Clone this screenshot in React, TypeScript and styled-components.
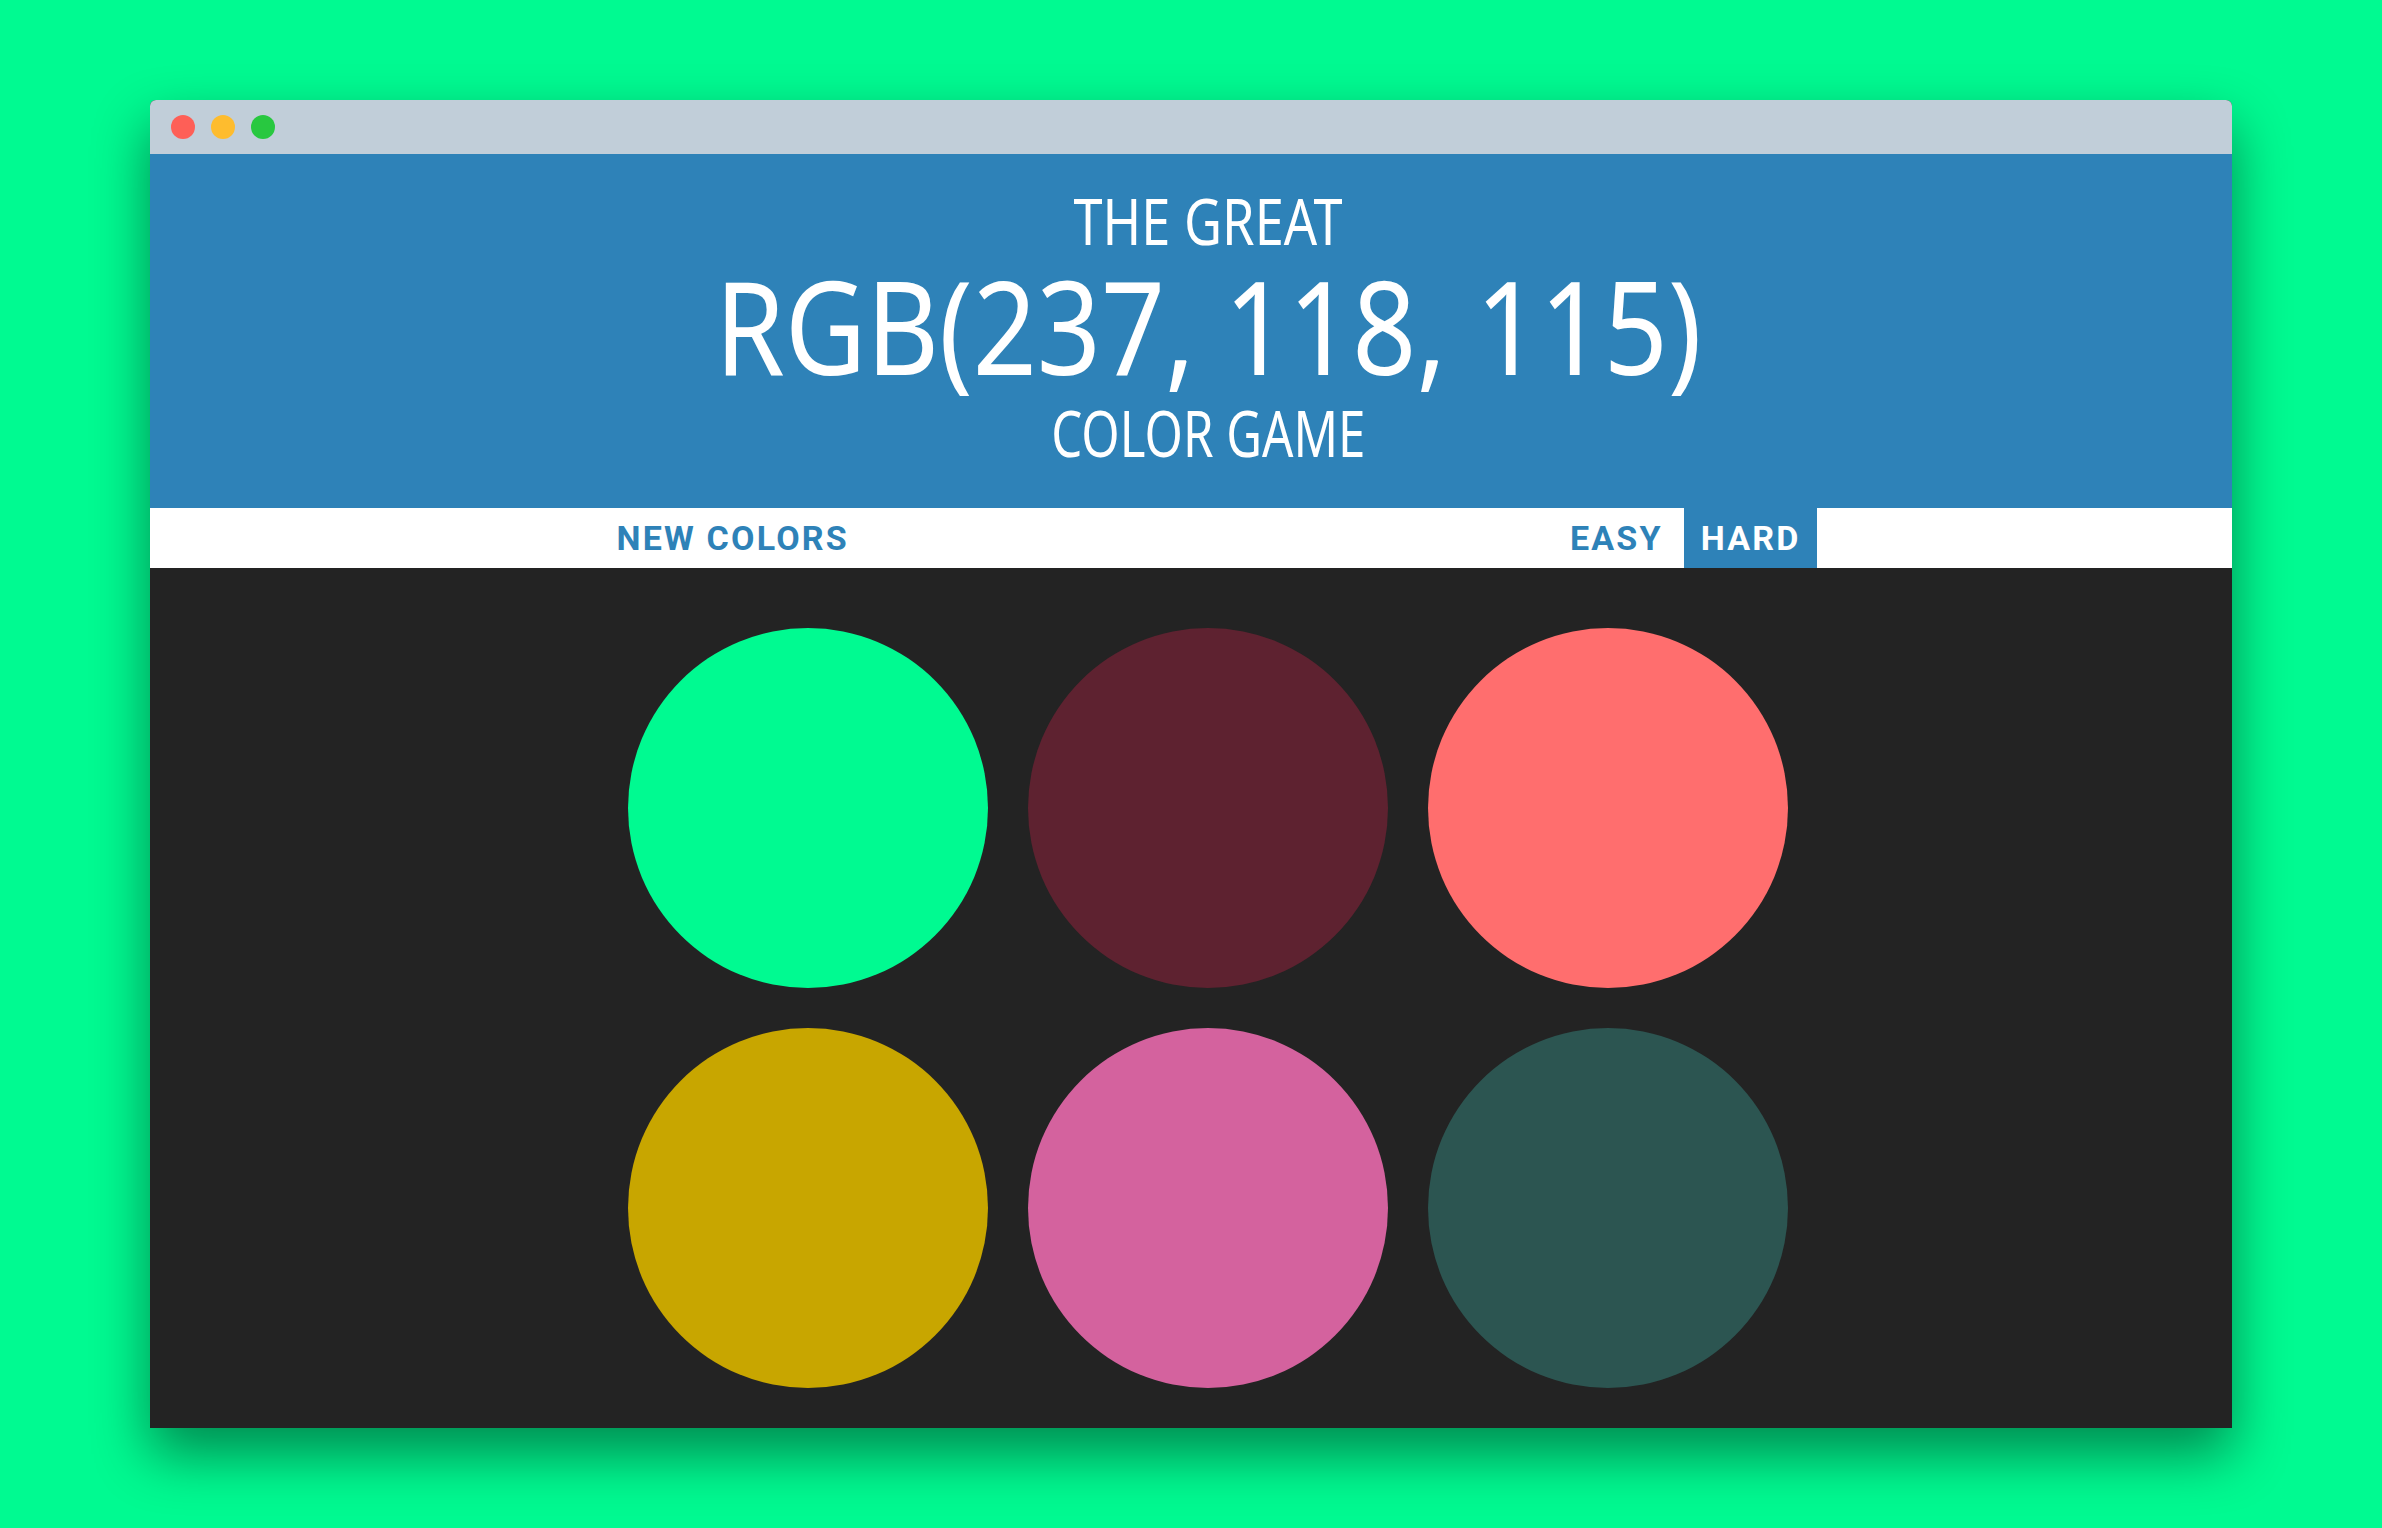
import React from "react";
import styled, { createGlobalStyle } from "styled-components";

const Global = createGlobalStyle`
  html, body { margin: 0; padding: 0; }
  body {
    background: #00fa91;
    min-height: 1528px;
    box-sizing: border-box;
    padding: 100px 150px 0;
    font-family: "Liberation Sans", Arial, sans-serif;
  }
`;

const Window = styled.div`
  width: 2082px;
  height: 1328px;
  display: flex;
  flex-direction: column;
  border-radius: 6px 6px 0 0;
  overflow: hidden;
  box-shadow: 0 26px 56px rgba(0, 0, 0, 0.45);
  background: #232323;
`;

const TitleBar = styled.div`
  height: 54px;
  flex: none;
  background: #c1ced9;
  display: flex;
  align-items: center;
  gap: 16px;
  padding-left: 21px;
`;

const Light = styled.span<{ $c: string }>`
  width: 24px;
  height: 24px;
  border-radius: 50%;
  background: ${(p) => p.$c};
`;

const Header = styled.header`
  flex: none;
  height: 354px;
  box-sizing: border-box;
  background: #2e82b8;
  color: #fff;
  display: flex;
  flex-direction: column;
  align-items: center;
  padding: 34px 0 0 34px;
  font-family: "Noto Sans", "Open Sans", sans-serif;
  font-weight: 400;
  text-transform: uppercase;
`;

const Small = styled.div<{ $sx: number }>`
  font-size: 63px;
  line-height: 66px;
  transform: scaleX(${(p) => p.$sx});
`;

const Big = styled.h1<{ $sx: number }>`
  margin: 4px 0 8px;
  font-size: 130px;
  line-height: 134px;
  font-weight: 400;
  transform: scaleX(${(p) => p.$sx});
`;

const Nav = styled.nav`
  flex: none;
  height: 60px;
  background: #fff;
  padding-left: 34px;
  display: flex;
  justify-content: center;
`;

const NavInner = styled.div`
  width: 1217px;
  display: flex;
  align-items: stretch;
  gap: 5px;
`;

const Spacer = styled.div`
  flex: 1;
`;

const NavButton = styled.button<{ $active?: boolean }>`
  border: none;
  margin: 0;
  padding: 0 16px 0 17px;
  background: ${(p) => (p.$active ? "#2e82b8" : "#fff")};
  color: ${(p) => (p.$active ? "#fff" : "#2e82b8")};
  font-family: Roboto, "Liberation Sans", sans-serif;
  font-weight: 700;
  font-size: 34px;
  letter-spacing: 2.2px;
  text-transform: uppercase;
  cursor: pointer;
`;

const Board = styled.main`
  flex: 1;
  padding: 60px 0 0 34px;
  display: flex;
  justify-content: center;
  align-items: flex-start;
`;

const Grid = styled.div`
  display: grid;
  grid-template-columns: repeat(3, 360px);
  gap: 40px;
`;

const Square = styled.div<{ $c: string }>`
  width: 360px;
  height: 360px;
  border-radius: 50%;
  background: ${(p) => p.$c};
`;

const colors = ["#00fa91", "#5e2230", "#ff6e6e", "#c8a600", "#d4629e", "#2c5551"];

export default function App() {
  return (
    <>
      <Global />
      <Window>
        <TitleBar>
          <Light $c="#fe5f57" />
          <Light $c="#febc2e" />
          <Light $c="#28c840" />
        </TitleBar>
        <Header>
          <Small $sx={0.83}>The Great</Small>
          <Big $sx={0.862}>RGB(237, 118, 115)</Big>
          <Small $sx={0.78}>Color Game</Small>
        </Header>
        <Nav>
          <NavInner>
            <NavButton>New Colors</NavButton>
            <Spacer />
            <NavButton>Easy</NavButton>
            <NavButton $active>Hard</NavButton>
          </NavInner>
        </Nav>
        <Board>
          <Grid>
            {colors.map((c, i) => (
              <Square key={i} $c={c} />
            ))}
          </Grid>
        </Board>
      </Window>
    </>
  );
}
